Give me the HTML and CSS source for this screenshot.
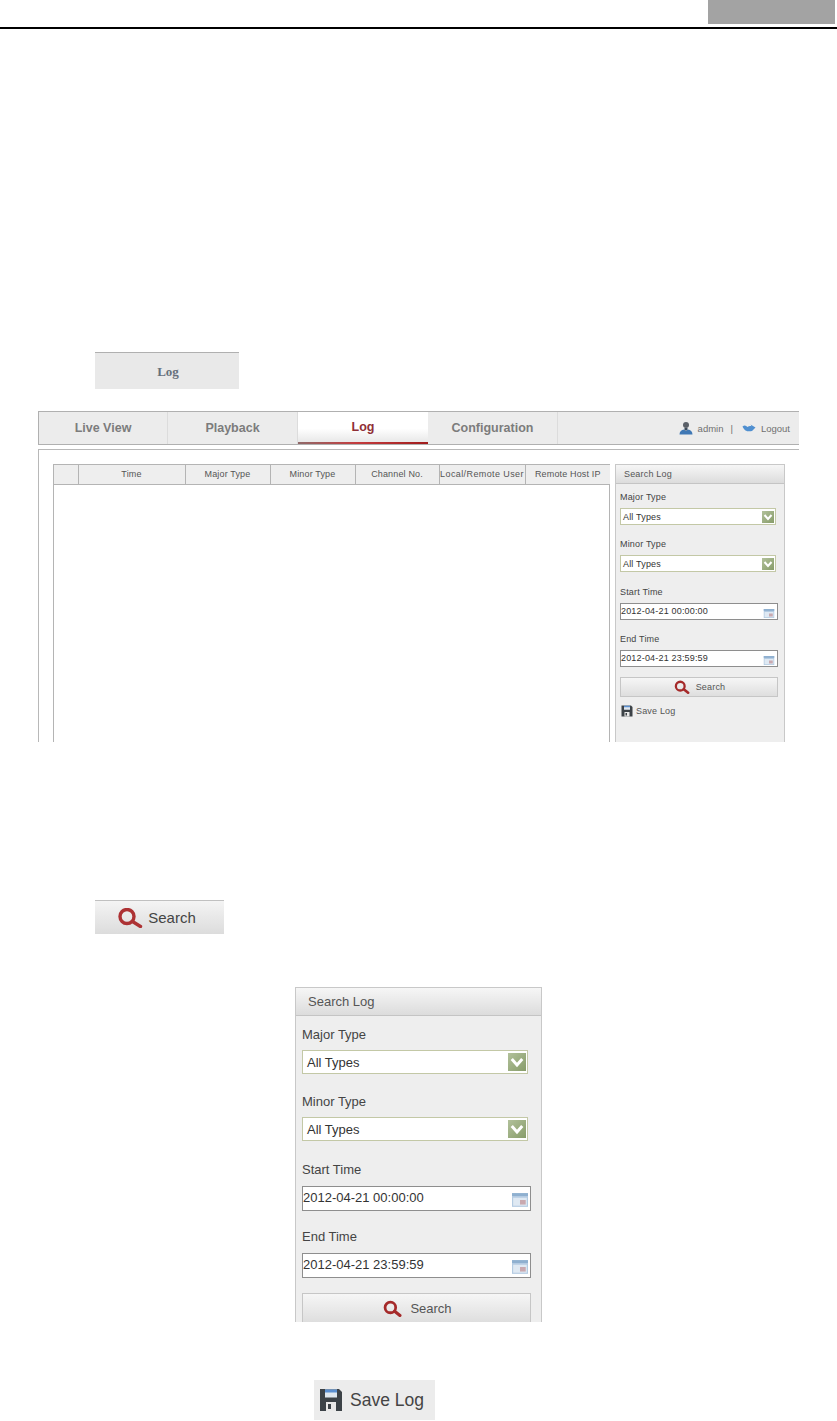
FILE: index.html
```html
<!DOCTYPE html>
<html lang="en">
<head>
<meta charset="utf-8">
<title>Log</title>
<link rel="stylesheet" href="styles.css">
</head>
<body>
<header class="page-top"><div class="page-tab"></div></header>

<div class="log-key">Log</div>

<section class="console">
  <nav class="nav">
    <div class="nav-tab">Live View</div>
    <div class="nav-tab">Playback</div>
    <div class="nav-tab nav-tab-active">Log</div>
    <div class="nav-tab">Configuration</div>
    <div class="nav-user">
      <svg class="nav-icon" viewBox="0 0 14 14"><circle cx="7" cy="4" r="3" fill="#5a6068"/><path d="M5.500 7h3v2.500h-3z" fill="#3b4a5a"/><path d="M0.500 13.500c0-3 2-4.500 4.500-5l2 1.500 2-1.500c2.500.5 4.500 2 4.500 5z" fill="#3f78b5"/></svg>
      <span>admin</span>
      <span class="nav-sep">|</span>
      <svg class="nav-icon" viewBox="0 0 14 14"><path d="M0.500 5.500c2-1.500 3.500-1 5 .5 1.200-1 2.500-1.200 4-.8L8.500 3.500 13.500 6.500 10 10c-2 .5-5 .5-6.500-.5C2.300 8.700 1.300 7.300 0.500 5.500z" fill="#4f8fd0"/></svg>
      <span>Logout</span>
    </div>
  </nav>
  <div class="workspace">
    <div class="log-grid">
      <table class="log-table">
        <colgroup>
          <col class="col-check"><col class="col-time"><col class="col-major"><col class="col-minor"><col class="col-channel"><col class="col-user"><col class="col-ip">
        </colgroup>
        <thead>
          <tr><th></th><th>Time</th><th>Major Type</th><th>Minor Type</th><th>Channel No.</th><th class="th-wide">Local/Remote User</th><th>Remote Host IP</th></tr>
        </thead>
      </table>
    </div>
    <aside class="search-panel panel-small">
      <div class="panel-title">Search Log</div>
      <div class="panel-body">
        <div class="field">
          <div class="field-label">Major Type</div>
          <div class="select"><span>All Types</span><span class="select-arrow"><svg viewBox="0 0 12 12"><path d="M2.500 4l3.500 4 3.500-4" fill="none" stroke="#fff" stroke-width="2"/></svg></span></div>
        </div>
        <div class="field">
          <div class="field-label">Minor Type</div>
          <div class="select"><span>All Types</span><span class="select-arrow"><svg viewBox="0 0 12 12"><path d="M2.500 4l3.500 4 3.500-4" fill="none" stroke="#fff" stroke-width="2"/></svg></span></div>
        </div>
        <div class="field field-time">
          <div class="field-label">Start Time</div>
          <div class="date-input"><span>2012-04-21 00:00:00</span><svg class="calendar" viewBox="0 0 14 12"><rect width="14" height="12" fill="#b4cbe2"/><rect y="0" width="14" height="2.500" fill="#8fb0d0"/><path d="M1 4h12v7H1z" fill="#dfe9f3"/><rect x="7" y="6" width="5" height="4" fill="#c9a9b0"/></svg></div>
        </div>
        <div class="field field-time">
          <div class="field-label">End Time</div>
          <div class="date-input"><span>2012-04-21 23:59:59</span><svg class="calendar" viewBox="0 0 14 12"><rect width="14" height="12" fill="#b4cbe2"/><rect y="0" width="14" height="2.500" fill="#8fb0d0"/><path d="M1 4h12v7H1z" fill="#dfe9f3"/><rect x="7" y="6" width="5" height="4" fill="#c9a9b0"/></svg></div>
        </div>
        <div class="search-btn"><svg class="lens" viewBox="0 0 20 16"><circle cx="8" cy="7" r="5" fill="none" stroke="#a52a2a" stroke-width="2.600"/><path d="M12 10.500l5 4" stroke="#a52a2a" stroke-width="3" stroke-linecap="round"/></svg><span>Search</span></div>
        <div class="save-row"><svg class="disk" viewBox="0 0 24 24"><path d="M1 1h19l3 3v19H1z" fill="#3c4247"/><rect x="6" y="1.500" width="12" height="8" fill="#dfe7ef"/><rect x="6" y="1.500" width="12" height="3" fill="#5b8fd0"/><rect x="7" y="14" width="10" height="9" fill="#e8e8e8"/><rect x="9" y="16" width="3" height="5" fill="#3c4247"/></svg><span>Save Log</span></div>
      </div>
    </aside>
  </div>
</section>

<div class="search-key"><svg class="key-lens" viewBox="0 0 26 20"><circle cx="10" cy="8.500" r="7" fill="none" stroke="#ad3234" stroke-width="3.400"/><path d="M15.500 13.500l8 5" stroke="#ad3234" stroke-width="3.400" stroke-linecap="round"/></svg><span>Search</span></div>

<aside class="search-panel panel-large">
  <div class="panel-title">Search Log</div>
  <div class="panel-body">
    <div class="field">
      <div class="field-label">Major Type</div>
      <div class="select"><span>All Types</span><span class="select-arrow"><svg viewBox="0 0 12 12"><path d="M2.500 4l3.500 4 3.500-4" fill="none" stroke="#fff" stroke-width="2"/></svg></span></div>
    </div>
    <div class="field">
      <div class="field-label">Minor Type</div>
      <div class="select"><span>All Types</span><span class="select-arrow"><svg viewBox="0 0 12 12"><path d="M2.500 4l3.500 4 3.500-4" fill="none" stroke="#fff" stroke-width="2"/></svg></span></div>
    </div>
    <div class="field field-time">
      <div class="field-label">Start Time</div>
      <div class="date-input"><span>2012-04-21 00:00:00</span><svg class="calendar" viewBox="0 0 14 12"><rect width="14" height="12" fill="#b4cbe2"/><rect y="0" width="14" height="2.500" fill="#8fb0d0"/><path d="M1 4h12v7H1z" fill="#dfe9f3"/><rect x="7" y="6" width="5" height="4" fill="#c9a9b0"/></svg></div>
    </div>
    <div class="field field-time">
      <div class="field-label">End Time</div>
      <div class="date-input"><span>2012-04-21 23:59:59</span><svg class="calendar" viewBox="0 0 14 12"><rect width="14" height="12" fill="#b4cbe2"/><rect y="0" width="14" height="2.500" fill="#8fb0d0"/><path d="M1 4h12v7H1z" fill="#dfe9f3"/><rect x="7" y="6" width="5" height="4" fill="#c9a9b0"/></svg></div>
    </div>
    <div class="search-btn"><svg class="lens" viewBox="0 0 20 16"><circle cx="8" cy="7" r="5" fill="none" stroke="#a52a2a" stroke-width="2.600"/><path d="M12 10.500l5 4" stroke="#a52a2a" stroke-width="3" stroke-linecap="round"/></svg><span>Search</span></div>
  </div>
</aside>

<div class="save-key"><svg class="key-disk" viewBox="0 0 24 24"><path d="M1 1h19l3 3v19H1z" fill="#3c4247"/><rect x="6" y="1.500" width="12" height="8" fill="#dfe7ef"/><rect x="6" y="1.500" width="12" height="3" fill="#5b8fd0"/><rect x="7" y="14" width="10" height="9" fill="#e8e8e8"/><rect x="9" y="16" width="3" height="5" fill="#3c4247"/></svg><span>Save Log</span></div>
</body>
</html>
```
FILE: styles.css
```css
* { box-sizing: border-box; }
html, body { margin: 0; padding: 0; background: #fff; }
body { width: 837px; height: 1421px; overflow: hidden; font-family: "Liberation Sans", Arial, sans-serif; color: #333; }

.page-top { height: 29px; border-bottom: 2px solid #000; display: flex; justify-content: flex-end; padding-right: 2px; }
.page-tab { width: 127px; height: 24px; background: #a3a3a3; }

.log-key { width: 144px; height: 37px; margin: 323px 0 0 95px; padding-left: 2px; background: #e9e9e9; border-top: 1px solid #b0b0b0; font: bold 13px/38px "Liberation Serif", serif; color: #66707c; text-align: center; }

.console { width: 761px; height: 331px; margin: 22px 0 0 38px; overflow: hidden; }
.nav { height: 34px; display: flex; align-items: stretch; background: #ececec; border: 1px solid #b0b0b0; border-right: 0; }
.nav-tab { width: 130px; display: flex; align-items: center; justify-content: center; border-right: 1px solid #dcdcdc; font-size: 12.500px; font-weight: bold; color: #7c7c7c; }
.nav-tab:first-child { width: 129px; }
.nav-tab-active { background: linear-gradient(#fff, #fff 55%, #e8e8e8); border-bottom: 2px solid #a32a2a; border-image: linear-gradient(90deg, #8f6a6a, #c43c3e 45%, #a01c1c) 1; border-right: 0; color: #8f2f35; }
.nav-user { margin-left: auto; padding-right: 9px; display: flex; align-items: center; gap: 5px; font-size: 9.500px; color: #707070; }
.nav-sep { margin: 0 4px 0 2px; }
.nav-icon { width: 14px; height: 14px; }

.workspace { margin-top: 4px; height: 293px; padding: 14px 0 0 14px; border-top: 1px solid #b8b8b8; border-left: 1px solid #b8b8b8; display: flex; gap: 5px; }
.log-grid { width: 557px; height: 300px; border: 1px solid #b4b4b4; }
.log-table { width: 556px; table-layout: fixed; border-collapse: collapse; }
.col-check { width: 24px; }
.col-time { width: 107px; }
.col-major, .col-minor { width: 85px; }
.col-channel { width: 84px; }
.col-user { width: 86px; }
.col-ip { width: 85px; }
.log-table th { height: 19px; padding: 0; background: #eeeeee; border-bottom: 1px solid #b4b4b4; border-right: 1px solid #b4b4b4; font-size: 9px; letter-spacing: .15px; font-weight: normal; color: #555; white-space: nowrap; overflow: hidden; }
.log-table th:last-child { border-right: 0; }
.log-table .th-wide { letter-spacing: .4px; }

.search-panel { background: #eeeeee; border: 1px solid #c8c8c8; border-bottom: 0; overflow: hidden; }
.panel-title { background: linear-gradient(#f6f6f6, #dcdcdc); border-bottom: 1px solid #c4c4c4; height: var(--title-h); line-height: var(--title-h); padding-left: var(--title-pad); font-size: var(--font); letter-spacing: var(--ls); color: #555; }
.panel-body { padding: var(--body-top) 0 0 var(--body-pad); }
.field { margin-bottom: var(--gap); }
.field-label { height: var(--label-h); padding-bottom: var(--label-lift); display: flex; align-items: center; font-size: var(--font); letter-spacing: var(--ls); color: #444; }
.select { width: var(--select-w); height: var(--select-h); background: #fff; border: 1px solid #c3c8a6; display: flex; align-items: center; justify-content: space-between; padding: 0 1px 0 var(--text-pad); font-size: var(--font); letter-spacing: var(--ls); color: #333; }
.select-arrow { width: var(--arrow); height: var(--arrow); background: linear-gradient(135deg, #b2c19b, #879c69); display: flex; }
.select-arrow svg { width: 100%; height: 100%; }
.field-time { margin-bottom: var(--time-gap); }
.field-time .field-label { height: var(--time-label-h); }
.date-input { width: var(--input-w); height: var(--time-h); background: #fff; border: 1px solid #8e8e8e; display: flex; align-items: center; justify-content: space-between; padding: 0 2px 0 0; font-size: var(--font); letter-spacing: var(--ls); color: #333; }
.date-input span { padding-bottom: 2px; }
.calendar { width: var(--cal-w); height: var(--cal-h); margin-top: 3px; }
.search-btn { width: var(--input-w); height: var(--btn-h); margin-top: var(--btn-top); display: flex; align-items: center; justify-content: center; gap: var(--btn-gap); background: linear-gradient(#f6f6f6, #dedede); border: 1px solid #c6c6c6; font-size: var(--font); letter-spacing: var(--ls); color: #555; }
.lens { width: var(--lens-w); height: var(--lens-h); }

.panel-small { --font: 9px; --ls: .18px; --label-lift: 2px; --title-h: 19px; --title-pad: 8px; --body-top: 4px; --body-pad: 4px; --label-h: 20px; --select-w: 156px; --select-h: 17px; --gap: 10px; --time-label-h: 21px; --time-h: 17px; --time-gap: 9px; --input-w: 158px; --text-pad: 2px; --arrow: 12px; --cal-w: 12px; --cal-h: 9px; --btn-h: 20px; --btn-top: 10px; --btn-gap: 5px; --lens-w: 18px; --lens-h: 14px; width: 170px; height: 300px; flex: none; }
.panel-large { --font: 13px; --ls: 0px; --label-lift: 0px; --title-h: 28px; --title-pad: 12px; --body-top: 3px; --body-pad: 6px; --label-h: 31px; --select-w: 226px; --select-h: 24px; --gap: 12px; --time-label-h: 33px; --time-h: 25px; --time-gap: 9px; --input-w: 229px; --text-pad: 4px; --arrow: 18px; --cal-w: 16px; --cal-h: 14px; --btn-h: 30px; --btn-top: 15px; --btn-gap: 6px; --lens-w: 23px; --lens-h: 17px; width: 247px; height: 335px; margin: 53px 0 0 295px; }

.save-row { display: flex; align-items: center; gap: 3px; margin-top: 8px; font-size: 9px; letter-spacing: .18px; color: #555; padding-left: 1px; }
.disk { width: 12px; height: 12px; }

.search-key { width: 129px; height: 34px; margin: 158px 0 0 95px; padding-right: 6px; display: flex; align-items: center; justify-content: center; gap: 5px; background: linear-gradient(#f4f4f4, #dcdcdc); border-top: 1px solid #c0c0c0; font-size: 15px; color: #444; }
.key-lens { width: 26px; height: 20px; }

.save-key { width: 121px; height: 40px; margin: 58px 0 0 314px; display: flex; align-items: center; gap: 7px; padding-left: 5px; background: #ececec; font-size: 17.500px; color: #444; }
.key-disk { width: 24px; height: 24px; }
```
